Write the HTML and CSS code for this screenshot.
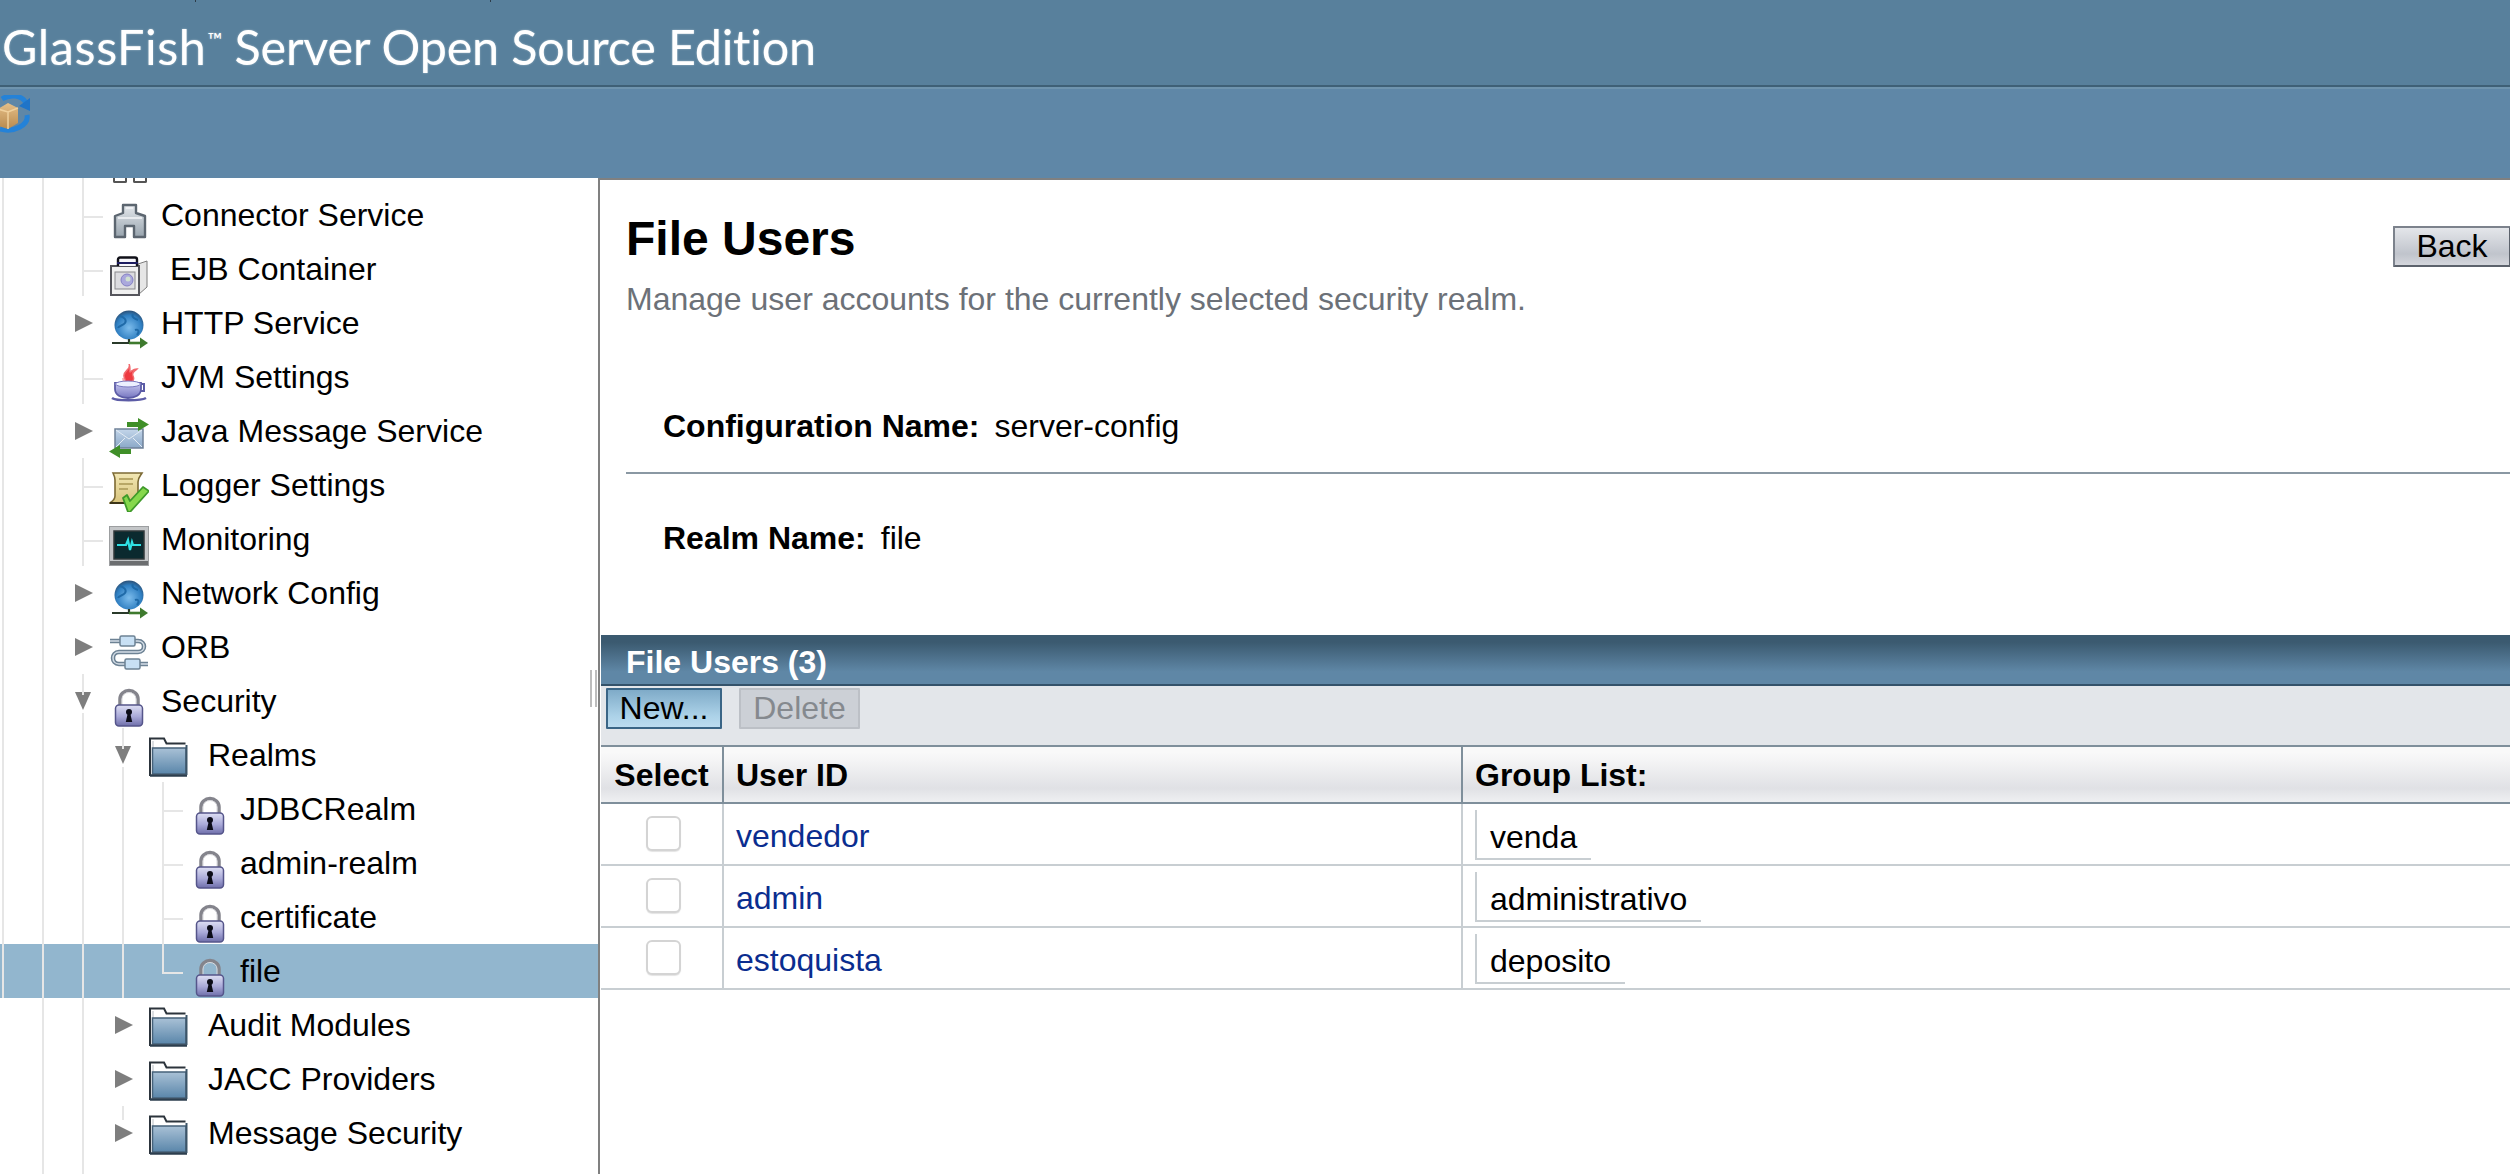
FILE: index.html
```html
<!DOCTYPE html>
<html lang="en">
<head>
<meta charset="utf-8">
<title>File Users</title>
<link rel="stylesheet" href="styles.css">
</head>
<body>
<svg class="defs" width="0" height="0" aria-hidden="true">
  <defs>
    <linearGradient id="gLock" x1="0" y1="0" x2="0" y2="1"><stop offset="0" stop-color="#dfe0f4"/><stop offset="0.55" stop-color="#a9a9d8"/><stop offset="1" stop-color="#6e6eaa"/></linearGradient>
    <linearGradient id="gFolder" x1="0" y1="0" x2="0" y2="1"><stop offset="0" stop-color="#a9c1d6"/><stop offset="1" stop-color="#5a86aa"/></linearGradient>
    <linearGradient id="gMetal" x1="0" y1="0" x2="0" y2="1"><stop offset="0" stop-color="#e4e8ec"/><stop offset="1" stop-color="#98a4ae"/></linearGradient>
    <radialGradient id="gGlobe" cx="0.5" cy="0.6" r="0.62"><stop offset="0" stop-color="#7cbcec"/><stop offset="0.7" stop-color="#2f7fc2"/><stop offset="1" stop-color="#2b4a6c"/></radialGradient>
    <linearGradient id="gScroll" x1="0" y1="0" x2="0" y2="1"><stop offset="0" stop-color="#f2e7b4"/><stop offset="1" stop-color="#d8c47c"/></linearGradient>
    <linearGradient id="gEnv" x1="0" y1="0" x2="0" y2="1"><stop offset="0" stop-color="#c4d6ea"/><stop offset="1" stop-color="#8aa8c8"/></linearGradient>
    <linearGradient id="gCup" x1="0" y1="0" x2="0" y2="1"><stop offset="0" stop-color="#c8c8f0"/><stop offset="1" stop-color="#7676c0"/></linearGradient>
    <linearGradient id="gBox" x1="0" y1="0" x2="0" y2="1"><stop offset="0" stop-color="#e6bf88"/><stop offset="1" stop-color="#b88a4e"/></linearGradient>

    <symbol id="i-lock" viewBox="0 0 40 40">
      <path d="M11 18V11a9 8.500 0 0 1 18 0v7" fill="none" stroke="#84848c" stroke-width="3.500"/>
      <path d="M13 18V11a7 6.500 0 0 1 14 0v7" fill="none" stroke="#d8d8dc" stroke-width="1"/>
      <rect x="6.500" y="17" width="27" height="21" rx="3.500" fill="url(#gLock)" stroke="#55558a" stroke-width="1.500"/>
      <circle cx="20" cy="24" r="3" fill="#0c0c18"/>
      <path d="M18.800 25h2.400l2 9h-6.400z" fill="#0c0c18"/>
    </symbol>
    <symbol id="i-folder" viewBox="0 0 40 40">
      <path d="M1 39V1.500h14l2.500 5h19" fill="none" stroke="#2c343c" stroke-width="2"/>
      <path d="M4 4v8h33" fill="none" stroke="#cfd4d8" stroke-width="1.500"/>
      <rect x="3.500" y="11" width="33.500" height="26" fill="url(#gFolder)" stroke="#46627a" stroke-width="1.500"/>
      <path d="M1 38.500h37" stroke="#2c3e4e" stroke-width="2.500"/>
      <path d="M37.500 8v30" stroke="#3c5568" stroke-width="2"/>
    </symbol>
    <symbol id="i-conn" viewBox="0 0 40 40">
      <path d="M14 3h13v8l9 3v21H25V24h-9v11H6V14l8-3z" fill="url(#gMetal)" stroke="#5c6670" stroke-width="2.400" stroke-linejoin="round"/>
      <path d="M9 16h24" stroke="#f4f6f8" stroke-width="1.500"/>
      <path d="M17 6h7" stroke="#f4f6f8" stroke-width="1.500"/>
    </symbol>
    <symbol id="i-ejb" viewBox="0 0 40 40">
      <path d="M29 8l9-3v26l-9 8z" fill="#e6e6e6" stroke="#7c7c7c"/>
      <rect x="2" y="10" width="28" height="29" fill="#f0f0f0" stroke="#55555c" stroke-width="2"/>
      <rect x="6" y="16" width="20" height="17" fill="#dcdce0" stroke="#88888c"/>
      <circle cx="18" cy="24" r="6" fill="#aaa8dc" stroke="#8480c4"/>
      <circle cx="19" cy="23" r="2.500" fill="#cfe0d0"/>
      <path d="M9 10V3.500a2 2 0 0 1 2-2h15a2 2 0 0 1 2 2V10" fill="#f6f6fa" stroke="#101018" stroke-width="2.400"/>
      <path d="M8 7h21" stroke="#1c1c60" stroke-width="2"/>
    </symbol>
    <symbol id="i-globe" viewBox="0 0 40 40">
      <circle cx="20" cy="15" r="14.500" fill="url(#gGlobe)"/>
      <path d="M11 6c4 1 7 4 5 7s-6 2-7 5M24 4c-2 3 2 5 5 6M26 20c3-1 5 1 2 5" fill="none" stroke="#1f6aa8" stroke-width="2"/>
      <path d="M20 29v4H3" fill="none" stroke="#2a3a2a" stroke-width="2.200"/>
      <path d="M20 33h13" stroke="#3e7a2e" stroke-width="2.600"/>
      <path d="M31 27.500l8 5.500-8 5.500z" fill="#3e7a2e"/>
    </symbol>
    <symbol id="i-java" viewBox="0 0 40 40">
      <path d="M20 0c3 5-6 7-5 12s3 6 1 9c7-1 10-5 8-9s2-5 4-7c-4 0-6 3-7 3s1-4-1-8z" fill="#ee3a40" stroke="#f26a6e" stroke-width="1.500"/>
      <path d="M14 14c1 4 1 6 3 8" stroke="#f7a8a8" stroke-width="2" fill="none"/>
      <path d="M6 19h26v6c0 6-6 9-13 9S6 31 6 25z" fill="url(#gCup)" stroke="#5c5ca6" stroke-width="1.800"/>
      <ellipse cx="19" cy="20" rx="12.500" ry="3" fill="#ecf0ff" stroke="#7a7ac0"/>
      <path d="M32 20h3v7h-4" fill="none" stroke="#5c5ca6" stroke-width="2"/>
      <path d="M3 34c4 3 29 3 34 0" fill="none" stroke="#5c5ca6" stroke-width="2.500"/>
    </symbol>
    <symbol id="i-msg" viewBox="0 0 40 40">
      <rect x="6" y="11" width="28" height="19" fill="url(#gEnv)" stroke="#6f8198" stroke-width="1.500"/>
      <path d="M7 12l13 9 13-9M7 29l9-9M33 29l-9-9" fill="none" stroke="#e4ecf4" stroke-width="1"/>
      <path d="M18 6.500h13" stroke="#3f8f28" stroke-width="5"/>
      <path d="M29 0l11 6.500L29 13z" fill="#3f8f28"/>
      <path d="M22 33.500H9" stroke="#3f8f28" stroke-width="5"/>
      <path d="M11 27L0 33.500 11 40z" fill="#3f8f28"/>
    </symbol>
    <symbol id="i-log" viewBox="0 0 40 40">
      <path d="M4 1h29c-2 3-4 5-4 9v14c0 3 0 5-2 7H1c3-2 5-4 5-7V8C6 5 5 3 4 1z" fill="url(#gScroll)" stroke="#7c6a34" stroke-width="1.600"/>
      <path d="M10 7h14M10 12h14M10 17h9" stroke="#b8a766" stroke-width="2"/>
      <path d="M1 31h17" stroke="#3c3418" stroke-width="2"/>
      <path d="M14 26l4-3 3 6L34 15l6 4-19 21h-2z" fill="#86d84c" stroke="#3f9a2a" stroke-width="1.800" stroke-linejoin="round"/>
    </symbol>
    <symbol id="i-mon" viewBox="0 0 40 40">
      <rect x="0.500" y="0.500" width="39" height="39" fill="#c4c6c8" stroke="#9c9ea0"/>
      <rect x="1" y="35" width="38" height="4" fill="#6c6e70"/>
      <rect x="5" y="5" width="30" height="28" fill="#0b2a2f" stroke="#30383a" stroke-width="1.500"/>
      <path d="M8 19h9l2-5 2 10 2-8 1 3h8" fill="none" stroke="#2fe0e4" stroke-width="2.200"/>
    </symbol>
    <symbol id="i-orb" viewBox="0 0 40 40">
      <path d="M1 7h28c8 0 8 11 0 11H10c-8 0-8 12 0 12h29" fill="none" stroke="#6d8294" stroke-width="4.500"/>
      <path d="M1 7h28c8 0 8 11 0 11H10c-8 0-8 12 0 12h29" fill="none" stroke="#d3dde6" stroke-width="1.500"/>
      <rect x="11" y="2" width="15" height="10" rx="1.500" fill="#c8e0f4" stroke="#6d8294" stroke-width="1.500"/>
      <rect x="16" y="25" width="15" height="10" rx="1.500" fill="#c8e0f4" stroke="#6d8294" stroke-width="1.500"/>
    </symbol>
  </defs>
</svg>

<div class="app">
  <header class="masthead">
    <span class="tick tick-a"></span>
    <span class="tick tick-b"></span>
    <div class="brand"><span class="brand-name">GlassFish</span><sup class="tm">™</sup> Server Open Source Edition</div>
  </header>
  <div class="toolbar">
    <svg class="tool-icon" viewBox="0 0 30 38" width="30" height="38">
      <path d="M2 4C10-1 22 0 26 8" fill="none" stroke="#2482d8" stroke-width="5"/>
      <path d="M30 3v13l-11-5z" fill="#1f74c8"/>
      <path d="M27 20c2 10-13 18-27 14" fill="none" stroke="#2482d8" stroke-width="5"/>
      <path d="M-2 14l10-6 10 5v15l-10 6-10-3z" fill="url(#gBox)"/>
      <path d="M-2 14l10 3 10-4M8 17v17" fill="none" stroke="#f0d09c" stroke-width="1.500"/>
    </svg>
  </div>
  <div class="workspace">
    <nav class="sidebar">
      <span class="splitter"></span>
      <div class="row row-stub">
        <span class="cell first v"></span><span class="cell v"></span><span class="cell v"></span>
        <span class="feet"><i></i><i></i></span>
      </div>
      <div class="row"><span class="cell first v"></span><span class="cell v"></span><span class="cell tee"></span><svg class="ico"><use href="#i-conn"/></svg><span class="label l2">Connector Service</span></div>
      <div class="row"><span class="cell first v"></span><span class="cell v"></span><span class="cell tee"></span><svg class="ico"><use href="#i-ejb"/></svg><span class="label l2x">EJB Container</span></div>
      <div class="row"><span class="cell first v"></span><span class="cell v"></span><span class="cell"><b class="tw"></b></span><svg class="ico"><use href="#i-globe"/></svg><span class="label l2">HTTP Service</span></div>
      <div class="row"><span class="cell first v"></span><span class="cell v"></span><span class="cell tee"></span><svg class="ico"><use href="#i-java"/></svg><span class="label l2">JVM Settings</span></div>
      <div class="row"><span class="cell first v"></span><span class="cell v"></span><span class="cell"><b class="tw"></b></span><svg class="ico"><use href="#i-msg"/></svg><span class="label l2">Java Message Service</span></div>
      <div class="row"><span class="cell first v"></span><span class="cell v"></span><span class="cell tee"></span><svg class="ico"><use href="#i-log"/></svg><span class="label l2">Logger Settings</span></div>
      <div class="row"><span class="cell first v"></span><span class="cell v"></span><span class="cell tee"></span><svg class="ico"><use href="#i-mon"/></svg><span class="label l2">Monitoring</span></div>
      <div class="row"><span class="cell first v"></span><span class="cell v"></span><span class="cell"><b class="tw"></b></span><svg class="ico"><use href="#i-globe"/></svg><span class="label l2">Network Config</span></div>
      <div class="row"><span class="cell first v"></span><span class="cell v"></span><span class="cell"><b class="tw"></b></span><svg class="ico"><use href="#i-orb"/></svg><span class="label l2">ORB</span></div>
      <div class="row"><span class="cell first v"></span><span class="cell v"></span><span class="cell open"><b class="tw down"></b></span><svg class="ico"><use href="#i-lock"/></svg><span class="label l2">Security</span></div>
      <div class="row"><span class="cell first v"></span><span class="cell v"></span><span class="cell v"></span><span class="cell open"><b class="tw down"></b></span><svg class="ico ico-folder"><use href="#i-folder"/></svg><span class="label l3">Realms</span></div>
      <div class="row"><span class="cell first v"></span><span class="cell v"></span><span class="cell v"></span><span class="cell v"></span><span class="cell tee"></span><svg class="ico ico-lock"><use href="#i-lock"/></svg><span class="label l4">JDBCRealm</span></div>
      <div class="row"><span class="cell first v"></span><span class="cell v"></span><span class="cell v"></span><span class="cell v"></span><span class="cell tee"></span><svg class="ico ico-lock"><use href="#i-lock"/></svg><span class="label l4">admin-realm</span></div>
      <div class="row"><span class="cell first v"></span><span class="cell v"></span><span class="cell v"></span><span class="cell v"></span><span class="cell tee"></span><svg class="ico ico-lock"><use href="#i-lock"/></svg><span class="label l4">certificate</span></div>
      <div class="row selected"><span class="cell first v"></span><span class="cell v"></span><span class="cell v"></span><span class="cell v"></span><span class="cell elbow"></span><svg class="ico ico-lock"><use href="#i-lock"/></svg><span class="label l4">file</span></div>
      <div class="row"><span class="cell first"></span><span class="cell v"></span><span class="cell v"></span><span class="cell"><b class="tw"></b></span><svg class="ico ico-folder"><use href="#i-folder"/></svg><span class="label l3">Audit Modules</span></div>
      <div class="row"><span class="cell first"></span><span class="cell v"></span><span class="cell v"></span><span class="cell"><b class="tw"></b></span><svg class="ico ico-folder"><use href="#i-folder"/></svg><span class="label l3">JACC Providers</span></div>
      <div class="row"><span class="cell first"></span><span class="cell v"></span><span class="cell v"></span><span class="cell stub"><b class="tw"></b></span><svg class="ico ico-folder"><use href="#i-folder"/></svg><span class="label l3">Message Security</span></div>
      <div class="row"><span class="cell first"></span><span class="cell v"></span><span class="cell v"></span></div>
    </nav>
    <main class="content">
      <div class="page-head">
        <div>
          <h1 class="page-title">File Users</h1>
          <p class="page-help">Manage user accounts for the currently selected security realm.</p>
        </div>
        <button class="btn btn-back" type="button">Back</button>
      </div>
      <div class="prop prop-config"><span class="prop-label">Configuration Name:</span><span>server-config</span></div>
      <hr class="rule">
      <div class="prop prop-realm"><span class="prop-label">Realm Name:</span><span>file</span></div>
      <section class="panel">
        <h2 class="panel-title">File Users (3)</h2>
        <div class="actions">
          <button class="btn btn-new" type="button">New...</button>
          <button class="btn btn-delete" type="button" disabled>Delete</button>
        </div>
        <table class="users">
          <thead>
            <tr><th class="col-select">Select</th><th class="col-id">User ID</th><th class="col-groups">Group List:</th></tr>
          </thead>
          <tbody>
            <tr><td class="cell-check"><input type="checkbox" aria-label="Select vendedor"></td><td class="cell-id"><a href="#">vendedor</a></td><td class="cell-groups"><span class="group">venda</span></td></tr>
            <tr><td class="cell-check"><input type="checkbox" aria-label="Select admin"></td><td class="cell-id"><a href="#">admin</a></td><td class="cell-groups"><span class="group">administrativo</span></td></tr>
            <tr><td class="cell-check"><input type="checkbox" aria-label="Select estoquista"></td><td class="cell-id"><a href="#">estoquista</a></td><td class="cell-groups"><span class="group">deposito</span></td></tr>
          </tbody>
        </table>
      </section>
    </main>
  </div>
</div>
</body>
</html>
```

FILE: styles.css
```css
* { box-sizing: border-box; }
html, body { margin: 0; padding: 0; height: 100%; overflow: hidden; background: #fff; }
body { font: 32px/40px "Liberation Sans", Arial, sans-serif; color: #000; }
.defs { position: absolute; }

.app { display: flex; flex-direction: column; height: 1174px; width: 2510px; overflow: hidden; }

/* Masthead */
.masthead {
  position: relative;
  flex: 0 0 89px;
  background: #58809c;
  border-bottom: 2px solid #6f94ae;
  box-shadow: inset 0 -2px 0 #3f6076;
}
.tick { position: absolute; top: 0; width: 1px; height: 2px; background: #2d3c48; }
.tick-a { left: 195px; }
.tick-b { left: 490px; }
.brand {
  font: 400 48.5px/56px Lato, "Open Sans", sans-serif;
  color: #fff;
  padding: 18px 0 0 2px;
  letter-spacing: -0.2px;
  text-shadow: 0 0 2px rgba(255,255,255,.5);
  white-space: nowrap;
}
.brand-name { letter-spacing: 0.6px; }
.tm { font-size: 20px; line-height: 0; vertical-align: 18px; margin-left: 1px; }

.toolbar { flex: 0 0 89px; background: #5f87a7; padding-top: 6px; }
.tool-icon { display: block; overflow: hidden; filter: blur(0.5px); }

/* Layout */
.workspace { flex: 1; display: flex; min-height: 0; }

/* Tree */
.sidebar {
  position: relative;
  flex: 0 0 600px;
  border-right: 2px solid #808080;
  overflow: hidden;
  background: #fff;
}
.splitter {
  position: absolute;
  left: 590px; top: 492px;
  width: 7px; height: 37px;
  border-left: 2px solid #bcbcbc;
  border-right: 2px solid #bcbcbc;
}
.row { display: flex; height: 54px; flex: none; align-items: flex-start; line-height: 54px; white-space: nowrap; }
.row-stub { height: 10px; position: relative; }
.selected { background: #92b6ce; }
.cell { position: relative; flex: 0 0 40px; height: 100%; display: flex; align-items: center; justify-content: center; }
.cell.first { flex-basis: 23px; }
.cell::before, .cell::after { content: none; position: absolute; background: #e6e6e6; }
.cell.v::before, .cell.tee::before { content: ""; left: 19px; width: 2px; top: 0; bottom: 0; }
.cell.first.v::before { left: 2px; }
.cell.tee::after, .cell.elbow::after { content: ""; left: 21px; right: 0; top: 28px; height: 2px; }
.cell.elbow::before { content: ""; left: 19px; width: 2px; top: 0; height: 30px; }
.cell.open::before { content: ""; left: 19px; width: 2px; top: 0; height: 21px; }
.cell.open::after { content: ""; left: 19px; width: 2px; top: 39px; bottom: 0; }
.cell.stub::before { content: ""; left: 19px; width: 2px; top: 0; height: 14px; }
.tw { display: block; width: 0; height: 0; border-left: 18px solid #7e7e7e; border-top: 9px solid transparent; border-bottom: 9px solid transparent; margin-left: 2px; }
.tw.down { border-top: 18px solid #7e7e7e; border-left: 8px solid transparent; border-right: 8px solid transparent; border-bottom: 0; margin-left: 0; }
.ico { flex: none; width: 40px; height: 40px; margin: 14px 0 0 6px; filter: blur(0.4px); }
.ico-folder { margin-top: 9px; }
.ico-lock { margin-left: 7px; }
.label { display: block; }
.l2 { margin-left: 12px; }
.l2x { margin-left: 21px; }
.l3 { margin-left: 19px; }
.l4 { margin-left: 10px; }
.feet { display: flex; gap: 6px; margin-left: 10px; }
.feet i { display: block; width: 14px; height: 5px; border: 2px solid #555; border-top: 0; border-radius: 0 0 2px 2px; }

/* Main */
.content { flex: 1; min-width: 0; border-top: 2px solid #808080; overflow: hidden; }
.page-head { display: flex; justify-content: space-between; align-items: flex-start; padding: 32px 0 0 26px; }
.page-title { margin: 0; font: 700 48px/54px "Liberation Sans", Arial, sans-serif; }
.page-help { margin: 13px 0 0 0; color: #6c7178; }

.btn {
  font: 32px/37px "Liberation Sans", Arial, sans-serif;
  height: 41px; padding: 0; margin: 0;
  color: #000; display: block;
  border-radius: 1px;
}
.btn-back {
  width: 118px; margin: 14px -1px 0 0;
  border: 2px solid #5c626c;
  border-top-color: #7c828c; border-left-color: #7c828c;
  background: linear-gradient(#e4e6ea, #c0c4cc 70%, #d4d6dc);
}
.prop { display: flex; padding-left: 63px; line-height: 40px; }
.prop-label { font-weight: 700; margin-right: 15px; }
.prop-config { margin-top: 87px; }
.prop-realm { margin-top: 44px; }
.rule { margin: 26px 0 0 26px; border: 0; height: 2px; background: #8a98a3; }

/* Panel */
.panel { margin: 77px 0 0 1px; }
.panel-title {
  margin: 0; height: 51px; padding: 7px 0 0 25px;
  font: 700 32px/40px "Liberation Sans", Arial, sans-serif; color: #fff;
  background: linear-gradient(#3b5a70 15%, #5f87a6 75%, #5f87a6);
  border-bottom: 2px solid #34526a;
}
.actions { display: flex; gap: 17px; height: 59px; background: #e3e6ea; padding: 2px 0 0 5px; }
.btn-new {
  width: 116px;
  border: 2px solid #3a6586;
  background: linear-gradient(#7fabc8, #acd2e8 70%, #bcdcf0);
}
.btn-delete {
  width: 121px;
  border: 2px solid #bcc0c6;
  background: #ccd0d6;
  color: #85898e;
}

.users { width: 100%; border-collapse: separate; border-spacing: 0; table-layout: fixed; }
.users th {
  height: 59px; padding: 0; text-align: left; font-weight: 700;
  border-top: 2px solid #7f8f9b; border-bottom: 2px solid #7f8f9b;
  background: linear-gradient(#f9f9f9 10%, #f4f4f5 25%, #e0e1e5 75%, #eff0f2);
}
.users .col-select { width: 123px; text-align: center; border-right: 2px solid #7f8f9b; }
.users .col-id { width: 739px; padding-left: 12px; border-right: 2px solid #7f8f9b; }
.users .col-groups { padding-left: 12px; }
.users td { height: 62px; padding: 0; vertical-align: top; border-bottom: 2px solid #c8ced2; }
.cell-check, .cell-id { border-right: 2px solid #c8ced2; }
.cell-check { text-align: center; padding: 12px 0 0 3px !important; }
.cell-check input {
  appearance: none; -webkit-appearance: none;
  display: inline-block; vertical-align: top;
  width: 35px; height: 35px; margin: 0;
  background: #fff; border: 2px solid #d4d4d4; border-radius: 6px;
  box-shadow: 0 1px 1px #e4e4e4;
}
.cell-id { padding: 12px 0 0 12px !important; }
.cell-id a { color: #0a2d8f; text-decoration: none; }
.cell-groups { padding: 6px 0 0 12px !important; }
.group {
  display: inline-block; height: 50px;
  padding: 6px 14px 0 13px; line-height: 42px;
  border-left: 2px solid #c8ced2; border-bottom: 2px solid #c8ced2;
}
```
